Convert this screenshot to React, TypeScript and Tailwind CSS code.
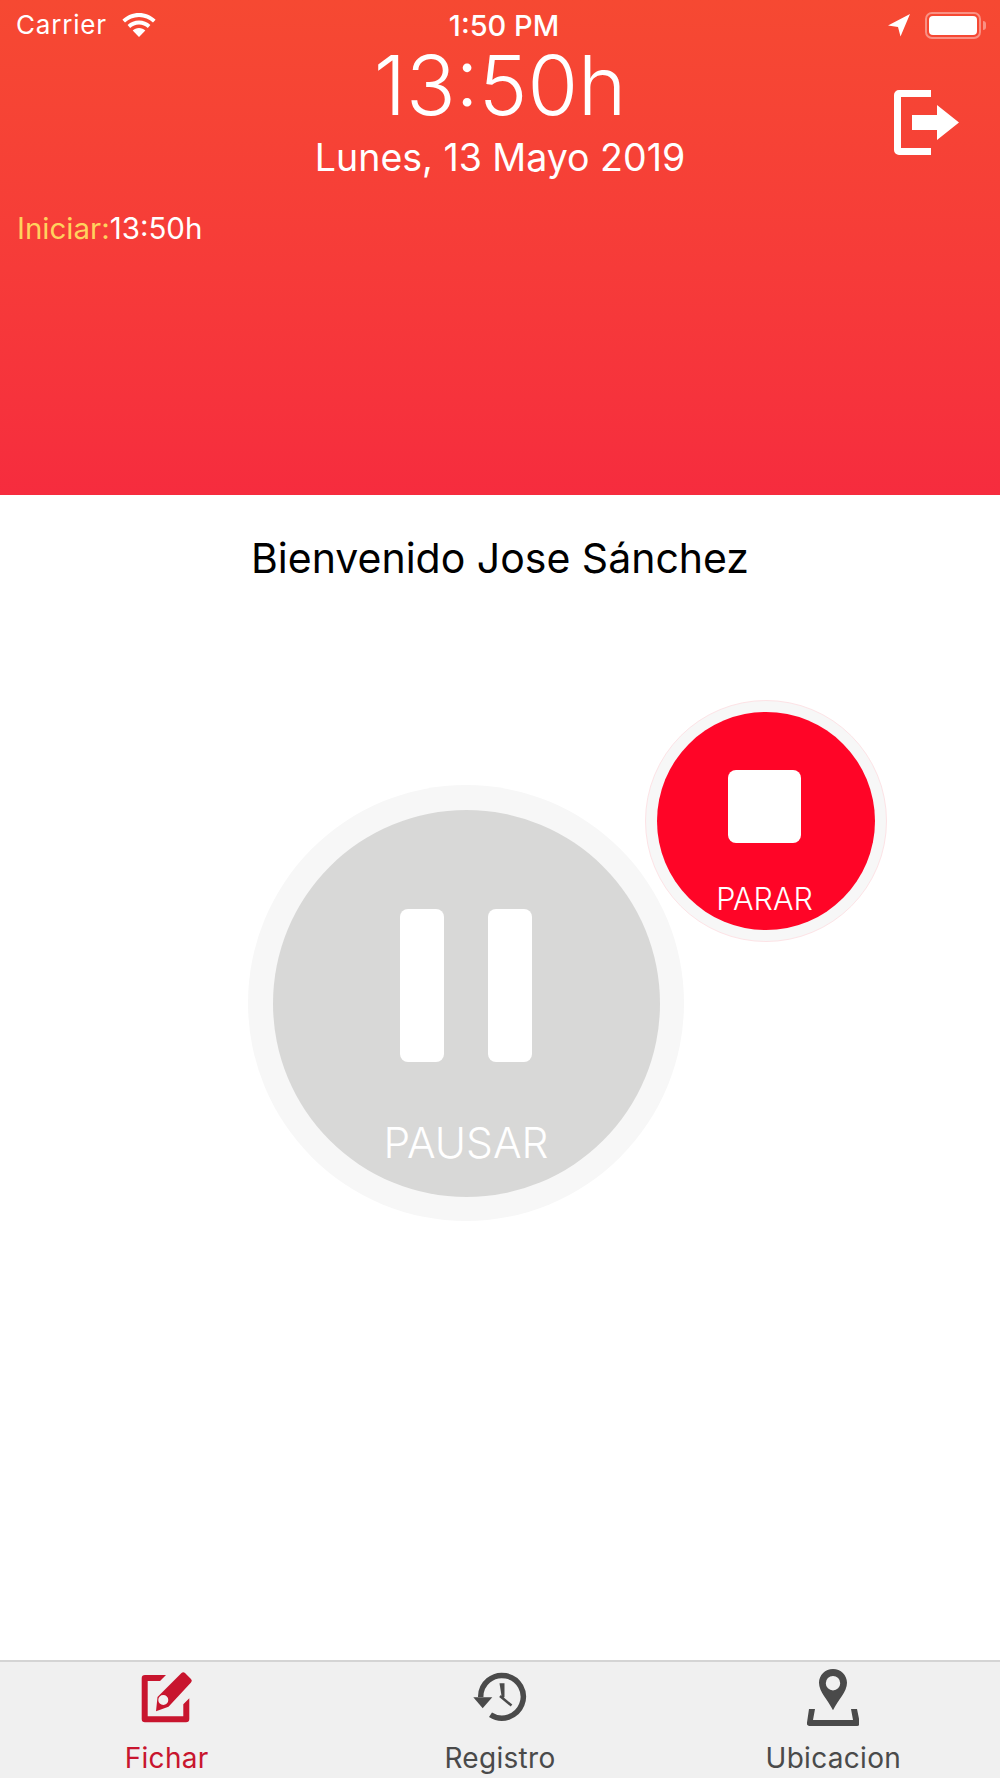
import React from "react";

function WifiIcon() {
  return (
    <svg viewBox="0 0 36 26" className="h-[26px] w-[36px]" fill="#fff">
      <path d="M18 5c5.4 0 10.4 2.1 14 5.6l2.6-2.8C30.300 3.600 24.400 1 18 1S5.700 3.600 1.400 7.800L4 10.600C7.600 7.100 12.600 5 18 5z" />
      <path d="M18 12.500c3.400 0 6.500 1.300 8.800 3.400l2.600-2.800C26.400 10.300 22.400 8.600 18 8.600s-8.400 1.700-11.400 4.500l2.600 2.800c2.300-2.100 5.400-3.400 8.800-3.400z" />
      <path d="M18 16c-2.500 0-4.700 1-6.300 2.500L18 25l6.300-6.500C22.700 17 20.500 16 18 16z" />
    </svg>
  );
}

function LocationArrow() {
  return (
    <svg viewBox="0 0 24 24" className="h-[24px] w-[24px]" fill="#fff">
      <path d="M23 1 1 12.500l10 1.500 2.500 9.500z" />
    </svg>
  );
}

function Battery() {
  return (
    <div className="flex items-center gap-[2px]">
      <div className="h-[27px] w-[56px] rounded-[7px] border-2 border-white/40 p-[2px]">
        <div className="h-full w-full rounded-[4px] bg-white" />
      </div>
      <div className="h-[9px] w-[3px] rounded-r-full bg-white/40" />
    </div>
  );
}

function ExitIcon() {
  return (
    <svg viewBox="0 0 66 66" className="h-[66px] w-[66px]" fill="#fff">
      <path d="M37 0H5a5 5 0 0 0-5 5v55a5 5 0 0 0 5 5h32v-7H7V7h30z" />
      <path d="M18 25h25V15l22 17.500L43 50V40H18z" />
    </svg>
  );
}

function EditIcon() {
  return (
    <svg viewBox="0 -3 73 66" className="h-[66px] w-[73px]" fill="#c8152e">
      <path d="M36 10H15a3.300 3.300 0 0 0-3.300 3.300V54a3.300 3.300 0 0 0 3.300 3.300h41a3.300 3.300 0 0 0 3.300-3.300V33.300l-6 6V51.300H17.700V16H30z" />
      <path
        fillRule="evenodd"
        d="M51.500 8a2.500 2.500 0 0 1 3.500 0l6 6a2.500 2.500 0 0 1 0 3.500L38.500 41.700 26 46.300 27.500 32zM33.300 30a5 5 0 1 0 0 10 5 5 0 0 0 0-10z"
      />
    </svg>
  );
}

function HistoryIcon() {
  return (
    <svg viewBox="0 -3 80 66" className="h-[66px] w-[80px]">
      <path d="M20.700 32a21.300 21.300 0 1 1 9.800 17.700" fill="none" stroke="#4a4a4a" strokeWidth="5.500" />
      <path d="M13.300 32.300h19L22.700 43.300z" fill="#4a4a4a" />
      <path d="M39.500 18.300h5V32l-2.500 2z" fill="#4a4a4a" />
      <path d="M40 31 51.500 40.500" fill="none" stroke="#4a4a4a" strokeWidth="2.500" />
    </svg>
  );
}

function PinIcon() {
  return (
    <svg viewBox="0 0 52 57" className="mb-[2px] h-[57px] w-[52px]" fill="#4a4a4a">
      <path
        fillRule="evenodd"
        d="M26 0c7.800 0 14 6.200 14 13.800 0 9-8.800 17.200-14 27.400C20.800 31 12 22.800 12 13.800 12 6.200 18.200 0 26 0zm0 7a7.200 7.200 0 1 0 0 14.400A7.200 7.200 0 0 0 26 7z"
      />
      <path d="M2 40h6l-2 11h40l-2-11h6l2.800 13.500A2.800 2.800 0 0 1 50 57H2a2.800 2.800 0 0 1-2-3.500z" />
    </svg>
  );
}

function TabItem({ icon, label, active }: { icon: React.ReactNode; label: string; active?: boolean }) {
  return (
    <div className="flex flex-col items-center">
      <div className="flex h-[66px] items-end justify-center">{icon}</div>
      <span
        className={`mt-[13px] text-[28px] leading-[34px] tracking-[0.3px] ${active ? "text-[#c8152e]" : "text-[#4a4a4a]"}`}
      >
        {label}
      </span>
    </div>
  );
}

export default function App() {
  return (
    <div className="flex min-h-screen flex-col bg-white font-['Inter',sans-serif] text-white">
      {/* header */}
      <header className="h-[495px] bg-gradient-to-b from-[#f64932] to-[#f62c3e]">
        <div className="grid h-[50px] grid-cols-3 items-center pr-[14px] pl-4">
          <div className="flex items-center gap-[14px]">
            <span className="text-[26px] leading-none tracking-[0.8px]">Carrier</span>
            <WifiIcon />
          </div>
          <span className="pl-[6px] text-center text-[29px] leading-none font-medium">1:50 PM</span>
          <div className="flex items-center justify-end gap-[14px]">
            <LocationArrow />
            <Battery />
          </div>
        </div>

        <div className="relative">
          <div className="text-center">
            <div className="text-[82px] leading-[72px] font-light">13:50h</div>
            <div className="mt-[14px] text-[37.500px] leading-[44px]">Lunes, 13 Mayo 2019</div>
          </div>
          <div className="absolute top-[40px] right-[40px]">
            <ExitIcon />
          </div>
        </div>

        <div className="mt-[30px] pl-[17px] text-[29.500px] leading-[36px]">
          <span className="text-[#ffd25e]">Iniciar:</span>
          <span>13:50h</span>
        </div>
      </header>

      <main className="flex-1">
        <h1 className="mt-[38px] text-center text-[41px] leading-[50px] text-black">Bienvenido Jose Sánchez</h1>

        <div className="mt-[202px] ml-[248px] w-fit">
          <div className="relative h-[436px] w-[436px]">
            <div className="flex h-full w-full items-center justify-center rounded-full bg-[#f7f7f7]">
              <div className="flex h-[387px] w-[387px] flex-col items-center rounded-full bg-[#d8d8d7]">
                <div className="mt-[99px] flex gap-[44px]">
                  <div className="h-[153px] w-[44px] rounded-[8px] bg-white" />
                  <div className="h-[153px] w-[44px] rounded-[8px] bg-white" />
                </div>
                <span className="mt-[57px] text-[42.500px] leading-[48px] font-light">PAUSAR</span>
              </div>
            </div>

            {/* stop button sits over the corner of the pause one */}
            <div className="absolute top-[-85px] left-[397px] flex h-[242px] w-[242px] items-center justify-center rounded-full border border-[#fde3e6] bg-[#f7f7f7]">
              <div className="flex h-[218px] w-[218px] flex-col items-center rounded-full bg-[#ff0527]">
                <div className="mt-[58px] mr-[4px] h-[73px] w-[73px] rounded-[8px] bg-white" />
                <span className="mt-[38px] mr-[3px] text-[30.500px] leading-[36px] font-light">PARAR</span>
              </div>
            </div>
          </div>
        </div>
      </main>

      {/* tab bar */}
      <nav className="grid h-[118px] grid-cols-3 border-t-2 border-[#d4d4d4] bg-[#f0f0f0]">
        <TabItem active label="Fichar" icon={<EditIcon />} />
        <TabItem label="Registro" icon={<HistoryIcon />} />
        <TabItem label="Ubicacion" icon={<PinIcon />} />
      </nav>
    </div>
  );
}
